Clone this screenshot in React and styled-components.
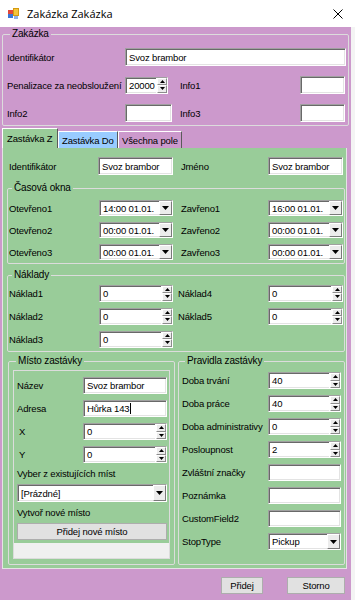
import React from 'react';
import styled, { createGlobalStyle } from 'styled-components';

const PURPLE = '#cc99cc';
const GREEN = '#99cc99';
const BLUE = '#99ccff';

const GlobalStyle = createGlobalStyle`
  html, body {
    margin: 0;
    padding: 0;
    background: #ffffff;
  }
  body {
    font-family: "Liberation Sans", Arial, sans-serif;
    font-size: 9.5px;
    letter-spacing: -0.15px;
    color: #000;
  }
  * {
    box-sizing: border-box;
  }
`;

const Window = styled.div`
  width: 355px;
  height: 600px;
  display: flex;
  flex-direction: column;
  background: #f4f4f4;
  overflow: hidden;
`;

const TitleBar = styled.div`
  height: 27px;
  flex: none;
  display: flex;
  align-items: center;
  background: #ffffff;
  padding-left: 8px;
`;

const Title = styled.div`
  flex: 1;
  margin-left: 8px;
  font-family: "Open Sans", "Liberation Sans", sans-serif;
  font-size: 11px;
  letter-spacing: 0;
  color: #000;
`;

const CloseBox = styled.div`
  width: 34px;
  display: flex;
  justify-content: center;
`;

const Client = styled.div`
  flex: 1;
  display: flex;
  flex-direction: column;
  background: ${PURPLE};
  margin-right: 4px;
  padding: 0 2px;
`;

const Group = styled.fieldset`
  margin: ${(p) => p.$margin || '0'};
  padding: ${(p) => p.$pad || '0'};
  border: 1px solid #dcdcdc;
  border-radius: 2px;
  min-width: 0;
  display: flex;
  flex-direction: column;
`;

const Caption = styled.legend`
  padding: 0 2px;
  margin-left: 3px;
  line-height: 12px;
  font-size: 10px;
`;

const PairGrid = styled.div`
  display: grid;
  grid-template-columns: ${(p) => p.$cols};
  grid-auto-rows: ${(p) => p.$rowH || 17}px;
  row-gap: ${(p) => p.$gap || 6}px;
  align-items: center;
  padding-left: ${(p) => p.$indent || 0}px;
`;

const Label = styled.span`
  white-space: nowrap;
  padding-left: ${(p) => p.$indent || 0}px;
`;

const Field = styled.div`
  width: ${(p) => (p.$w ? `${p.$w}px` : '100%')};
  height: ${(p) => p.$h || 17}px;
  grid-column: ${(p) => (p.$span ? '2 / -1' : 'auto')};
  display: flex;
  align-items: center;
  background: #ffffff;
  border: 1px solid;
  border-color: #a0a0a0 #ffffff #ffffff #a0a0a0;
  box-shadow: inset 1px 1px 0 #696969, inset -1px -1px 0 #e3e3e3;
  padding-left: 3px;
  white-space: nowrap;
  overflow: hidden;
`;

const FieldText = styled.span`
  flex: 1;
  min-width: 0;
  white-space: nowrap;
`;

const Caret = styled.span`
  width: 1px;
  height: 11px;
  background: #000;
  margin-left: 1px;
`;

const SpinColumn = styled.div`
  width: 11px;
  height: 100%;
  display: flex;
  flex-direction: column;
  border-left: 1px solid #ffffff;
`;

const SpinButton = styled.div`
  flex: 1;
  display: flex;
  align-items: center;
  justify-content: center;
  background: #ececec;
  border: 1px solid;
  border-color: #ffffff #8c8c8c #8c8c8c #ffffff;
`;

const DropButton = styled.div`
  width: 13px;
  height: 100%;
  display: flex;
  align-items: center;
  justify-content: center;
  background: #ececec;
  border: 1px solid;
  border-color: #ffffff #7a7a7a #7a7a7a #ffffff;
`;

const TabStrip = styled.div`
  height: 20px;
  margin-top: 2px;
  display: flex;
  align-items: flex-end;
  flex: none;
`;

const Tab = styled.div`
  height: ${(p) => (p.$active ? 20 : 17)}px;
  width: ${(p) => p.$w}px;
  display: flex;
  align-items: center;
  padding-left: ${(p) => (p.$active ? 4 : 3)}px;
  background: ${(p) => p.$bg};
  border: 1px solid;
  border-bottom: none;
  border-color: #ffffff #5a5a5a transparent #ffffff;
  white-space: nowrap;
  font-size: 9.5px;
`;

const TabPage = styled.div`
  background: ${GREEN};
  border: 1px solid #e4e4e4;
  border-top: none;
  margin-right: 2px;
  padding: 9px 1px 3px 4px;
  display: flex;
  flex-direction: column;
  flex: none;
`;

const BottomGroups = styled.div`
  display: grid;
  grid-template-columns: 167px 167px;
  column-gap: 3px;
  margin: 3px 0 0 1px;
`;

const InnerPanel = styled.div`
  border: 1px solid #dcdcdc;
  margin-top: 3px;
  padding-top: 6px;
  display: flex;
  flex-direction: column;
`;

const PanelText = styled.div`
  line-height: 12px;
  margin: ${(p) => p.$margin};
  padding-left: 3px;
  white-space: nowrap;
`;

const PanelControl = styled.div`
  margin: ${(p) => p.$margin};
  padding: 0 2px 0 3px;
`;

const Button = styled.div`
  width: ${(p) => (p.$w ? `${p.$w}px` : '100%')};
  height: 17px;
  display: flex;
  align-items: center;
  justify-content: center;
  background: #e1e1e1;
  border: 1px solid #adadad;
  white-space: nowrap;
`;

const StatusStrip = styled.div`
  height: 15px;
  margin-top: 3px;
  background: #f0f0f0;
`;

const Footer = styled.div`
  flex: 1;
  display: flex;
  justify-content: flex-end;
  align-items: flex-start;
  gap: 24px;
  padding: 8px 4px 0 0;
`;

const TinyArrow = ({ up }) => (
  <svg width="5" height="3" viewBox="0 0 5 3">
    <path d={up ? 'M0 3 L2.5 0 L5 3 Z' : 'M0 0 L2.5 3 L5 0 Z'} fill="#000" />
  </svg>
);

const DownArrow = () => (
  <svg width="7" height="4" viewBox="0 0 7 4">
    <path d="M0 0 L7 0 L3.5 4 Z" fill="#000" />
  </svg>
);

const Numeric = ({ value, w }) => (
  <Field $w={w}>
    <FieldText>{value}</FieldText>
    <SpinColumn>
      <SpinButton>
        <TinyArrow up />
      </SpinButton>
      <SpinButton>
        <TinyArrow />
      </SpinButton>
    </SpinColumn>
  </Field>
);

const Combo = ({ value, w, h }) => (
  <Field $w={w} $h={h}>
    <FieldText>{value}</FieldText>
    <DropButton>
      <DownArrow />
    </DropButton>
  </Field>
);

const AppIcon = () => (
  <svg width="11" height="11" viewBox="0 0 11 11">
    <rect x="5" y="0" width="6" height="8" fill="#f5c33b" />
    <rect x="5.5" y="0.5" width="5" height="7" fill="none" stroke="#d49a10" strokeWidth="1" />
    <rect x="0" y="2" width="5" height="4" fill="#e2483a" />
    <rect x="0" y="6" width="5" height="4" fill="#3b74d6" />
    <rect x="6" y="8" width="4" height="3" fill="#8fb0e6" />
  </svg>
);

const CloseIcon = () => (
  <svg width="10" height="10" viewBox="0 0 10 10">
    <path d="M0.5 0.5 L9.5 9.5 M9.5 0.5 L0.5 9.5" stroke="#000" strokeWidth="1" />
  </svg>
);

const App = () => {
  return (
    <>
      <GlobalStyle />
      <Window>
        <TitleBar>
          <AppIcon />
          <Title>Zakázka Zakázka</Title>
          <CloseBox>
            <CloseIcon />
          </CloseBox>
        </TitleBar>

        <Client>
          <Group $margin="1px 0 0 0" $pad="8px 1px 3px 4px">
            <Caption>Zakázka</Caption>
            <PairGrid $cols="118px 55px 120px 46px" $rowH={18} $gap={10}>
              <Label>Identifikátor</Label>
              <Field $span $h={18}>
                Svoz brambor
              </Field>
              <Label>Penalizace za neobsloužení</Label>
              <Numeric value="20000" w={43} />
              <Label>Info1</Label>
              <Field $w={45} $h={18} />
              <Label>Info2</Label>
              <Field $w={47} $h={18} />
              <Label>Info3</Label>
              <Field $w={45} $h={18} />
            </PairGrid>
          </Group>

          <TabStrip>
            <Tab $active $bg={GREEN} $w={56}>
              Zastávka Z
            </Tab>
            <Tab $bg={BLUE} $w={60}>
              Zastávka Do
            </Tab>
            <Tab $bg={PURPLE} $w={64}>
              Všechna pole
            </Tab>
          </TabStrip>

          <TabPage>
            <PairGrid $cols="89px 83px 87px 75px" $rowH={18} $indent={2}>
              <Label>Identifikátor</Label>
              <Field $w={75} $h={18}>
                Svoz brambor
              </Field>
              <Label>Jméno</Label>
              <Field $w={75} $h={18}>
                Svoz brambor
              </Field>
            </PairGrid>

            <Group $margin="7px 0 0 0" $pad="6px 0 3px 1px">
              <Caption>Časová okna</Caption>
              <PairGrid $cols="90px 82px 87px 75px" $rowH={16}>
                <Label>Otevřeno1</Label>
                <Combo value="14:00 01.01." w={74} h={16} />
                <Label>Zavřeno1</Label>
                <Combo value="16:00 01.01." w={75} h={16} />
                <Label>Otevřeno2</Label>
                <Combo value="00:00 01.01." w={74} h={16} />
                <Label>Zavřeno2</Label>
                <Combo value="00:00 01.01." w={75} h={16} />
                <Label>Otevřeno3</Label>
                <Combo value="00:00 01.01." w={74} h={16} />
                <Label>Zavřeno3</Label>
                <Combo value="00:00 01.01." w={75} h={16} />
              </PairGrid>
            </Group>

            <Group $margin="5px 0 0 0" $pad="4px 0 4px 1px">
              <Caption>Náklady</Caption>
              <PairGrid $cols="90px 79px 90px 75px" $rowH={16} $gap={7}>
                <Label>Náklad1</Label>
                <Numeric value="0" w={74} />
                <Label>Náklad4</Label>
                <Numeric value="0" w={75} />
                <Label>Náklad2</Label>
                <Numeric value="0" w={74} />
                <Label>Náklad5</Label>
                <Numeric value="0" w={75} />
                <Label>Náklad3</Label>
                <Numeric value="0" w={74} />
              </PairGrid>
            </Group>

            <BottomGroups>
              <Group $pad="0 4px 5px 4px">
                <Caption>Místo zastávky</Caption>
                <InnerPanel>
                  <PairGrid $cols="66px 84px" $gap={6} $indent={3}>
                    <Label>Název</Label>
                    <Field $w={84}>Svoz brambor</Field>
                    <Label>Adresa</Label>
                    <Field $w={84}>
                      <span>Hůrka 143</span>
                      <Caret />
                    </Field>
                    <Label $indent={2}>X</Label>
                    <Numeric value="0" w={84} />
                    <Label $indent={2}>Y</Label>
                    <Numeric value="0" w={84} />
                  </PairGrid>
                  <PanelText $margin="5px 0 0 0">Vyber z existujících míst</PanelText>
                  <PanelControl $margin="4px 0 0 0">
                    <Combo value="[Prázdné]" h={18} />
                  </PanelControl>
                  <PanelText $margin="5px 0 0 0">Vytvoř nové místo</PanelText>
                  <PanelControl $margin="4px 0 0 0">
                    <Button>Přidej nové místo</Button>
                  </PanelControl>
                  <StatusStrip />
                </InnerPanel>
              </Group>

              <Group $pad="5px 4px 4px 3px">
                <Caption>Pravidla zastávky</Caption>
                <PairGrid $cols="86px 73px" $gap={6}>
                  <Label>Doba trvání</Label>
                  <Numeric value="40" w={73} />
                  <Label>Doba práce</Label>
                  <Numeric value="40" w={73} />
                  <Label>Doba administrativy</Label>
                  <Numeric value="0" w={73} />
                  <Label>Posloupnost</Label>
                  <Numeric value="2" w={73} />
                  <Label>Zvláštní značky</Label>
                  <Field $w={73} />
                  <Label>Poznámka</Label>
                  <Field $w={73} />
                  <Label>CustomField2</Label>
                  <Field $w={73} />
                  <Label>StopType</Label>
                  <Combo value="Pickup" w={73} />
                </PairGrid>
              </Group>
            </BottomGroups>
          </TabPage>

          <Footer>
            <Button $w={42}>Přidej</Button>
            <Button $w={58}>Storno</Button>
          </Footer>
        </Client>
      </Window>
    </>
  );
};

export default App;
